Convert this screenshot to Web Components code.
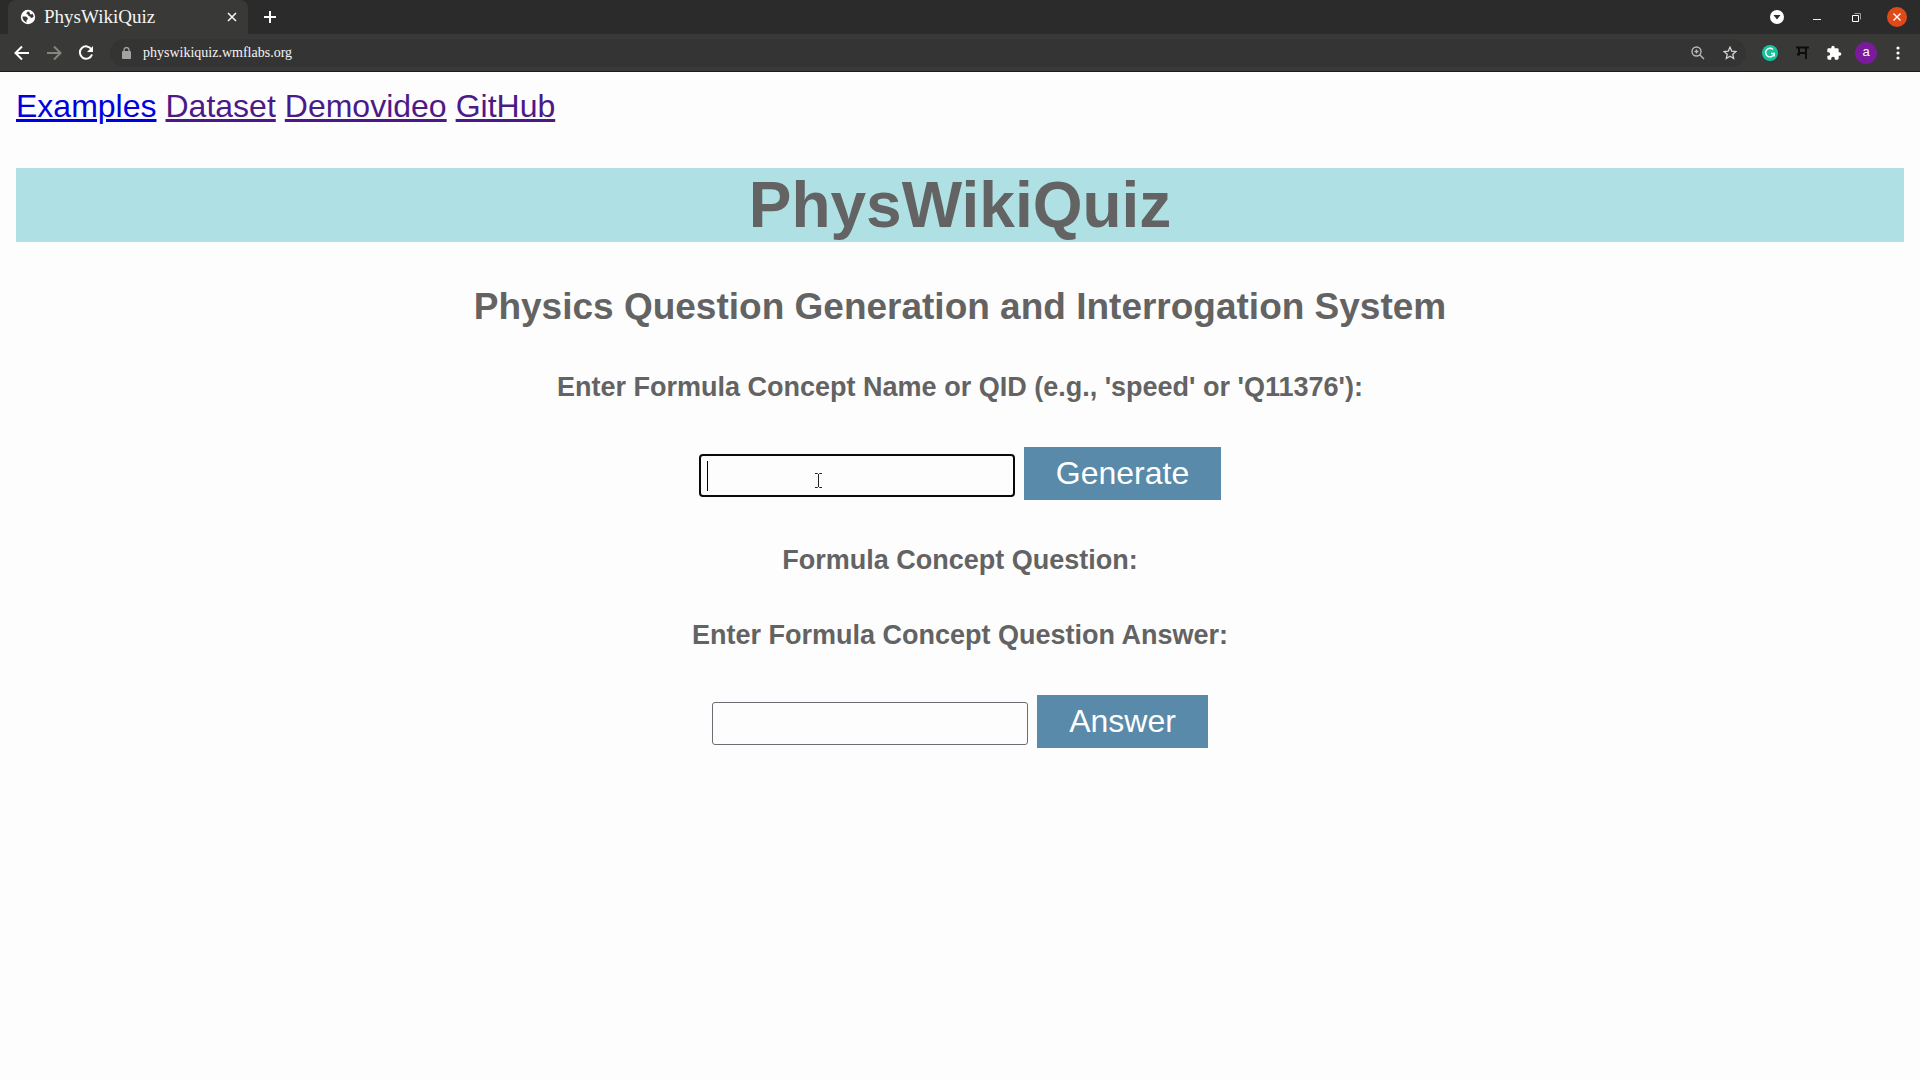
<!DOCTYPE html>
<html lang="en">
<head>
<meta charset="utf-8">
<title>PhysWikiQuiz</title>
<style>
body{margin:0;background:#fdfdfd;font-family:"Liberation Sans",Arial,sans-serif;font-size:32px;color:#636363}
</style>
</head>
<body>
<browser-chrome></browser-chrome>
<quiz-page></quiz-page>
<script>
class Base extends HTMLElement{
  constructor(){super();this.attachShadow({mode:'open'}).innerHTML=this.view();}
}
customElements.define('icon-button',class extends Base{
  view(){return `<style>
:host{display:flex}
button{all:unset;display:flex;align-items:center;justify-content:center;width:var(--w,32px);height:32px}
</style><button type="button" aria-label="${this.getAttribute('label')||''}"><slot></slot></button>`}
});
customElements.define('tab-strip',class extends Base{
  view(){return `<style>
:host{display:flex;height:34px;background:#2b2b2b;color:#f4f4f4;padding-left:8px;justify-content:space-between}
.tab{display:flex;align-items:center;box-sizing:border-box;width:240px;padding:0 4px 0 12px;background:#393937;border-radius:8px 8px 0 0}
.tab span{flex:1;font:19px/34px "Liberation Serif",serif;margin-left:8px}
.g{display:flex;align-items:center}
.win{gap:7px;padding-right:7px}
icon-button{--w:24px}
.win icon-button{--w:33px}
svg{display:block}
</style>
<div class="g"><div class="tab">
<svg width="16" height="16" viewBox="0 0 16 16"><circle cx="8" cy="8" r="7.2" fill="#fff"/><path d="M9 2.500Q6 3 6.500 5Q8.500 5 8.500 7Q10.500 7 11 9Q12.500 9 13.600 7.500Q13.200 4 9 2.500ZM2.400 7.500H6L7.800 9Q8 10.800 6.500 11.200V13.400Q2.800 12 2.400 7.500Z" fill="#393937"/><path d="M9 2.500Q12 2.500 12.500 5L10.500 5.500Z" fill="#fff"/></svg>
<span>PhysWikiQuiz</span>
<icon-button label="Close tab"><svg width="10" height="10" viewBox="0 0 10 10"><path d="M1 1L9 9M9 1L1 9" stroke="#f4f4f4" stroke-width="1.600"/></svg></icon-button></div>
<icon-button label="New tab" style="--w:44px"><svg width="12" height="12" viewBox="0 0 12 12"><path d="M6 0V12M0 6H12" stroke="#fff" stroke-width="2"/></svg></icon-button></div>
<div class="g win">
<icon-button label="Search tabs"><svg width="14" height="14" viewBox="0 0 14 14"><circle cx="7" cy="7" r="7" fill="#fff"/><path d="M3.500 5H10.500L7 9.500Z" fill="#2b2b2b"/></svg></icon-button>
<icon-button label="Minimize"><svg width="10" height="10" viewBox="0 0 10 10"><path d="M1 7.500H9" stroke="#eee"/></svg></icon-button>
<icon-button label="Restore"><svg width="9" height="9" viewBox="0 0 9 9"><path d="M2.500 .5H8.500V6.500" stroke="#999" fill="none"/><path d="M.5 2.500H6.500V8.500H.5Z" stroke="#fff" fill="none"/></svg></icon-button>
<icon-button label="Close"><svg width="20" height="20" viewBox="0 0 20 20"><circle cx="10" cy="10" r="10" fill="#e04a18"/><path d="M6.500 6.500L13.500 13.500M13.500 6.500L6.500 13.500" stroke="#fff" stroke-width="1.400"/></svg></icon-button>
</div>`}
});
customElements.define('tool-bar',class extends Base{
  view(){return `<style>
:host{display:flex;align-items:center;height:37px;background:#393937;padding:0 6px;border-bottom:1px solid #1c1c14}
.url{flex:1;display:flex;align-items:center;height:28px;border-radius:14px;background:#343434;padding:0 0 0 12px;margin:0 8px 0 8px}
input{all:unset;flex:1;font:14px/28px "Liberation Serif",serif;color:#f4f4f4;margin-left:12px}
svg{display:block}
.av{width:22px;height:22px;border-radius:50%;background:#7a1b9c;color:#fff;font:13px/20px "Liberation Sans",sans-serif;text-align:center}
</style>
<icon-button label="Back"><svg width="16" height="16" viewBox="0 0 16 16"><path d="M15 8H2M8 1.500L1.500 8L8 14.500" stroke="#fff" stroke-width="2" fill="none"/></svg></icon-button>
<icon-button label="Forward"><svg width="16" height="16" viewBox="0 0 16 16"><path d="M1 8H14M8 1.500L14.500 8L8 14.500" stroke="#85857f" stroke-width="2" fill="none"/></svg></icon-button>
<icon-button label="Reload"><svg width="16" height="16" viewBox="0 0 16 16"><path d="M13.500 4.500A6.200 6.200 0 1 0 14 9.500" stroke="#fff" stroke-width="2" fill="none"/><path d="M15 1V7H9Z" fill="#fff"/></svg></icon-button>
<div class="url">
<svg width="9" height="12" viewBox="0 0 9 12"><rect y="4" width="9" height="8" rx="1" fill="#a4a4a0"/><path d="M2 5V3A2.500 2.500 0 0 1 7 3V5" stroke="#a4a4a0" stroke-width="1.300" fill="none"/></svg>
<input type="text" aria-label="Address" value="physwikiquiz.wmflabs.org">
<icon-button label="Zoom"><svg width="14" height="14" viewBox="0 0 14 14"><circle cx="5.500" cy="5.500" r="4.500" stroke="#b8b8b4" stroke-width="1.400" fill="none"/><path d="M8.700 8.700L13 13M3.500 5.500H7.500M5.500 3.500V7.500" stroke="#b8b8b4" stroke-width="1.400"/></svg></icon-button>
<icon-button label="Bookmark"><svg width="14" height="14" viewBox="0 0 14 14"><path d="M7 1.200L8.700 5.100L13 5.500L9.800 8.300L10.700 12.500L7 10.300L3.300 12.500L4.200 8.300L1 5.500L5.300 5.100Z" stroke="#d4d4d0" stroke-width="1.300" fill="none"/></svg></icon-button>
</div>
<icon-button label="Writing assistant"><svg width="16" height="16" viewBox="0 0 16 16"><circle cx="8" cy="8" r="8" fill="#15c39a"/><path d="M11 4.500A4.300 4.300 0 1 0 12.200 8.500H9M12.200 8.500V11.500" stroke="#fff" stroke-width="1.400" fill="none"/></svg></icon-button>
<icon-button label="Input tool"><svg width="13" height="13" viewBox="0 0 13 13"><path d="M0 1.500H13M10 1V13M3 1V8.500M3 7H10M1 8.500H4" stroke="#0c0c0c" stroke-width="1.900" fill="none"/></svg></icon-button>
<icon-button label="Extensions"><svg width="16" height="16" viewBox="0 0 24 24"><path d="M20.500 11H19V7a2 2 0 0 0-2-2h-4V3.500a2.500 2.500 0 0 0-5 0V5H4a2 2 0 0 0-2 2v3.800h1.500a2.700 2.700 0 0 1 0 5.400H2V20a2 2 0 0 0 2 2h3.800v-1.500a2.700 2.700 0 0 1 5.400 0V22H17a2 2 0 0 0 2-2v-4h1.500a2.500 2.500 0 0 0 0-5z" fill="#fff"/></svg></icon-button>
<icon-button label="Profile"><div class="av">a</div></icon-button>
<icon-button label="Menu"><svg width="4" height="14" viewBox="0 0 4 14"><circle cx="2" cy="2" r="1.600" fill="#fff"/><circle cx="2" cy="7" r="1.600" fill="#fff"/><circle cx="2" cy="12" r="1.600" fill="#fff"/></svg></icon-button>
`}
});
customElements.define('browser-chrome',class extends Base{
  view(){return `<style>:host{display:block}</style><tab-strip></tab-strip><tool-bar></tool-bar>`}
});
customElements.define('quiz-form',class extends Base{
  view(){const f=this.hasAttribute('active');return `<style>
:host{display:block;text-align:center}
label{display:block;font-size:27px;line-height:31px;font-weight:bold;margin-bottom:44px}
form{display:flex;justify-content:center;align-items:flex-end;gap:9px;margin:0}
.box{position:relative;display:flex;margin-bottom:3px}
input{box-sizing:border-box;width:316px;height:43px;border:1px solid #6c6c74;border-radius:3px;background:#fdfdfd;font:27px/31px "Liberation Sans",sans-serif;padding:2px 6px;outline:0}
:host([active]) input{border:2px solid #0a0a0a;border-radius:4px}
button{border:0;border-radius:0;background:#5a8aaa;color:#fff;font:32px/37px "Liberation Sans",sans-serif;padding:8px 32px}
.caret{position:absolute;left:8px;top:7px;width:1px;height:30px;background:#000}
.mouse{position:absolute;left:115px;top:18px}
</style>
<label for="t"><slot></slot></label>
<form><div class="box"><input id="t" type="text" autocomplete="off">${f?`<i class="caret"></i><svg class="mouse" width="9" height="17" viewBox="0 0 9 17"><path d="M1 1.500H3.500L4.500 2.500L5.500 1.500H8M4.500 2V15M1 15.500H3.500L4.500 14.500L5.500 15.500H8" stroke="#222" fill="none"/></svg>`:''}</div><button type="button">${this.getAttribute('action')}</button></form>`}
});
customElements.define('quiz-page',class extends Base{
  view(){return `<style>
:host{display:block;padding:16px}
nav{display:flex;gap:9px;line-height:37px}
a{color:#4c1a88}
a:first-child{color:#0000e0}
h1,h2,h3{text-align:center;font-weight:bold;margin:0}
h1{margin-top:43px;font-size:64px;line-height:74px;background:#aee0e4}
h2{margin:43px 0 44px;font-size:37px;line-height:43px}
h3{margin:45px 0 44px;font-size:27px;line-height:31px}
</style>
<nav><a href="#examples">Examples</a><a href="#dataset">Dataset</a><a href="#demovideo">Demovideo</a><a href="#github">GitHub</a></nav>
<h1>PhysWikiQuiz</h1>
<h2>Physics Question Generation and Interrogation System</h2>
<quiz-form active action="Generate">Enter Formula Concept Name or QID (e.g., 'speed' or 'Q11376'):</quiz-form>
<h3>Formula Concept Question:</h3>
<quiz-form action="Answer">Enter Formula Concept Question Answer:</quiz-form>`}
});
</script>
</body>
</html>
